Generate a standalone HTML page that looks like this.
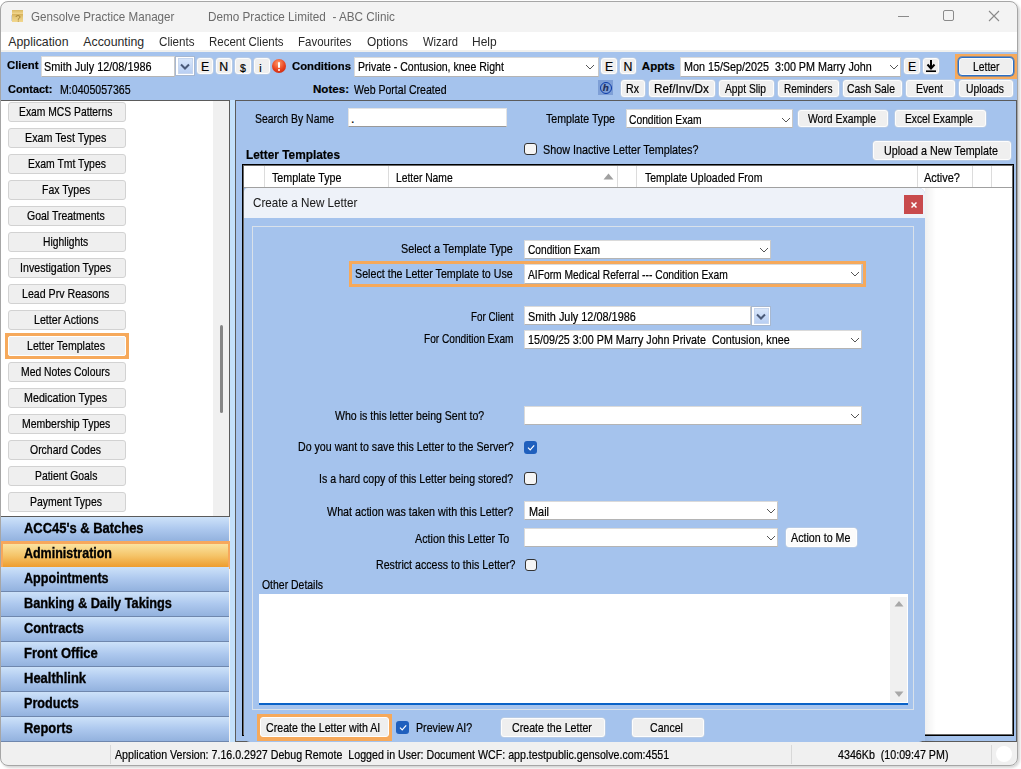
<!DOCTYPE html>
<html><head><meta charset="utf-8"><style>
*{box-sizing:border-box;margin:0;padding:0}
html,body{width:1021px;height:769px;overflow:hidden;background:#fff}
body{font-family:"Liberation Sans",sans-serif;position:relative}
.a{position:absolute}
.t{position:absolute;white-space:pre;line-height:1;-webkit-text-stroke:0.2px currentColor}

</style></head><body>
<div class="a" style="left:0px;top:0px;width:1021px;height:769px;background:#fff"></div>
<div class="a" style="left:1px;top:2px;width:1019px;height:766px;background:#d6d6d6;border-radius:9px;filter:blur(1px)"></div>
<div class="a" style="left:0px;top:1px;width:1018px;height:765px;background:#f3f3f3;border-radius:8px"></div>
<div class="a" style="left:10.5px;top:15px;width:1.5px;height:6px;background:#cfd3da;border-radius:1px"></div>
<div class="a" style="left:12px;top:10px;width:11px;height:12px;background:linear-gradient(#d9b863,#f0d48a 30%,#d8b25c 36%,#e5c777 60%,#f2d78f)"></div>
<svg class="a" style="left:14.5px;top:14.5px" width="6" height="7"><path d="M1 2Q1 0.5 3 0.5Q5 0.5 5 2Q5 3.2 3.3 3.8V4.8M3.3 5.6V6.6" fill="none" stroke="#a7873c" stroke-width="1"/></svg>
<div class="a" style="left:898px;top:16px;width:11px;height:1px;background:#8a8a8a"></div>
<div class="a" style="left:943px;top:10px;width:11px;height:11px;border:1px solid #8a8a8a;border-radius:2px"></div>
<svg class="a" style="left:988px;top:10px" width="12" height="12"><path d="M1 1L11 11M11 1L1 11" stroke="#8a8a8a" stroke-width="1.1"/></svg>
<div class="a" style="left:1px;top:32px;width:1016px;height:18px;background:#fff"></div>
<div class="a" style="left:1px;top:50px;width:1016px;height:2px;background:#f0f0ee"></div>
<div class="a" style="left:1px;top:52px;width:1016px;height:48px;background:#a5c3ed"></div>
<div class="a" style="left:1px;top:100px;width:1016px;height:1px;background:#5b5b5b"></div>
<div class="a" style="left:41px;top:56px;width:134px;height:21px;background:#fff;border:1px solid #dadada;border-bottom-color:#b4b4b4;border-right-color:#c8c8c8"></div>
<div class="a" style="left:175px;top:56px;width:19.599999999999994px;height:20px;background:#fff;border:1px solid #a8b8d0"></div>
<div class="a" style="left:178px;top:58px;width:14.599999999999994px;height:16px;background:linear-gradient(#d8e6fa,#b9cff3);border:1px solid #c6d6ef"></div>
<svg class="a" style="left:179.8px;top:63.0px" width="10" height="7"><path d="M1 1.5L5 5.5L9 1.5" fill="none" stroke="#4a5a78" stroke-width="2"/></svg>
<div class="a" style="left:197px;top:57.5px;width:16px;height:16.5px;background:#efefef;border:1px solid #fdfdfd;border-radius:3px;box-shadow:0 0 0 0.5px #c9d3df;"></div>
<div class="a" style="left:215.5px;top:57.5px;width:16.5px;height:16.5px;background:#efefef;border:1px solid #fdfdfd;border-radius:3px;box-shadow:0 0 0 0.5px #c9d3df;"></div>
<div class="a" style="left:234.7px;top:57.5px;width:16.30000000000001px;height:16.5px;background:#efefef;border:1px solid #fdfdfd;border-radius:3px;box-shadow:0 0 0 0.5px #c9d3df;"></div>
<div class="a" style="left:254px;top:57.5px;width:16px;height:16.5px;background:#efefef;border:1px solid #fdfdfd;border-radius:3px;box-shadow:0 0 0 0.5px #c9d3df;"></div>
<div class="a" style="left:272px;top:59px;width:14px;height:14px;border-radius:50%;background:radial-gradient(circle at 45% 30%,#ff9a6a,#e8401c 55%,#b82010)"></div>
<div class="a" style="left:277.8px;top:61.5px;width:2.599999999999966px;height:6.0px;background:#fff;border-radius:1.2px"></div>
<div class="a" style="left:277.8px;top:68.6px;width:2.599999999999966px;height:2.4000000000000057px;background:#fff;border-radius:1.2px"></div>
<div class="a" style="left:354px;top:56.5px;width:244.5px;height:20.5px;background:#fff;border:1px solid #dadada;border-bottom-color:#b4b4b4;border-right-color:#c8c8c8"></div>
<svg class="a" style="left:585px;top:63.7px" width="10" height="6"><path d="M1 1L5 5L9 1" fill="none" stroke="#555" stroke-width="1"/></svg>
<div class="a" style="left:601px;top:57.5px;width:16px;height:16.5px;background:#efefef;border:1px solid #fdfdfd;border-radius:3px;box-shadow:0 0 0 0.5px #c9d3df;"></div>
<div class="a" style="left:619.6px;top:57.5px;width:16.600000000000023px;height:16.5px;background:#efefef;border:1px solid #fdfdfd;border-radius:3px;box-shadow:0 0 0 0.5px #c9d3df;"></div>
<div class="a" style="left:679.6px;top:56.5px;width:221.69999999999993px;height:20.5px;background:#fff;border:1px solid #dadada;border-bottom-color:#b4b4b4;border-right-color:#c8c8c8"></div>
<svg class="a" style="left:889px;top:63.7px" width="10" height="6"><path d="M1 1L5 5L9 1" fill="none" stroke="#555" stroke-width="1"/></svg>
<div class="a" style="left:904px;top:57.7px;width:15.799999999999955px;height:16.39999999999999px;background:#efefef;border:1px solid #fdfdfd;border-radius:3px;box-shadow:0 0 0 0.5px #c9d3df;"></div>
<div class="a" style="left:922.7px;top:57.7px;width:16.399999999999977px;height:16.39999999999999px;background:#efefef;border:1px solid #fdfdfd;border-radius:3px;box-shadow:0 0 0 0.5px #c9d3df;"></div>
<svg class="a" style="left:925px;top:59px" width="12" height="14"><path d="M6 1V9M2.5 5.5L6 9.5L9.5 5.5" fill="none" stroke="#000" stroke-width="2"/><path d="M1 12.2H11" stroke="#000" stroke-width="1.6"/></svg>
<div class="a" style="left:955.2px;top:54px;width:61.799999999999955px;height:24.5px;background:#f6a95b"></div>
<div class="a" style="left:958px;top:57px;width:55.799999999999955px;height:18.700000000000003px;background:#efefef;border:1px solid #2a6fc6;border-radius:4px;box-shadow:0 0 0 0.7px rgba(42,111,198,.7),inset 0 0 0 1px #fafafa"></div>
<div class="a" style="left:598px;top:80px;width:15px;height:15px;background:#7e9fd6"></div>
<div class="a" style="left:599.6px;top:81.6px;width:12px;height:12px;border-radius:50%;border:1.5px solid #0b3aa8"></div>
<div class="a" style="left:621px;top:80.2px;width:23.700000000000045px;height:16.599999999999994px;background:#efefef;border:1px solid #fdfdfd;border-radius:3px;box-shadow:0 0 0 0.5px #c9d3df;"></div>
<div class="a" style="left:648.6px;top:80.2px;width:66.19999999999993px;height:16.599999999999994px;background:#efefef;border:1px solid #fdfdfd;border-radius:3px;box-shadow:0 0 0 0.5px #c9d3df;"></div>
<div class="a" style="left:718.9px;top:80.2px;width:54.700000000000045px;height:16.599999999999994px;background:#efefef;border:1px solid #fdfdfd;border-radius:3px;box-shadow:0 0 0 0.5px #c9d3df;"></div>
<div class="a" style="left:777.7px;top:80.2px;width:61.09999999999991px;height:16.599999999999994px;background:#efefef;border:1px solid #fdfdfd;border-radius:3px;box-shadow:0 0 0 0.5px #c9d3df;"></div>
<div class="a" style="left:843px;top:80.2px;width:58.60000000000002px;height:16.599999999999994px;background:#efefef;border:1px solid #fdfdfd;border-radius:3px;box-shadow:0 0 0 0.5px #c9d3df;"></div>
<div class="a" style="left:905.7px;top:80.2px;width:49.09999999999991px;height:16.599999999999994px;background:#efefef;border:1px solid #fdfdfd;border-radius:3px;box-shadow:0 0 0 0.5px #c9d3df;"></div>
<div class="a" style="left:958.6px;top:80.2px;width:54.60000000000002px;height:16.599999999999994px;background:#efefef;border:1px solid #fdfdfd;border-radius:3px;box-shadow:0 0 0 0.5px #c9d3df;"></div>
<div class="a" style="left:1px;top:101px;width:228px;height:415px;background:#fff"></div>
<div class="a" style="left:229px;top:100px;width:1px;height:417px;background:#5b5b5b"></div>
<div class="a" style="left:213px;top:101px;width:16px;height:415px;background:#f0f0f0"></div>
<div class="a" style="left:220px;top:325px;width:3px;height:88px;background:#858585;border-radius:1.5px"></div>
<div class="a" style="left:230px;top:100px;width:5px;height:642px;background:#c4e1fb"></div>
<div class="a" style="left:235px;top:100px;width:1px;height:642px;background:#5b5b5b"></div>
<div class="a" style="left:8px;top:102px;width:118px;height:20px;background:#efefef;border:1px solid #d2d2d2;border-radius:3px"></div>
<div class="a" style="left:8px;top:128px;width:118px;height:20px;background:#efefef;border:1px solid #d2d2d2;border-radius:3px"></div>
<div class="a" style="left:8px;top:154px;width:118px;height:20px;background:#efefef;border:1px solid #d2d2d2;border-radius:3px"></div>
<div class="a" style="left:8px;top:180px;width:118px;height:20px;background:#efefef;border:1px solid #d2d2d2;border-radius:3px"></div>
<div class="a" style="left:8px;top:206px;width:118px;height:20px;background:#efefef;border:1px solid #d2d2d2;border-radius:3px"></div>
<div class="a" style="left:8px;top:232px;width:118px;height:20px;background:#efefef;border:1px solid #d2d2d2;border-radius:3px"></div>
<div class="a" style="left:8px;top:258px;width:118px;height:20px;background:#efefef;border:1px solid #d2d2d2;border-radius:3px"></div>
<div class="a" style="left:8px;top:284px;width:118px;height:20px;background:#efefef;border:1px solid #d2d2d2;border-radius:3px"></div>
<div class="a" style="left:8px;top:310px;width:118px;height:20px;background:#efefef;border:1px solid #d2d2d2;border-radius:3px"></div>
<div class="a" style="left:5px;top:333px;width:124px;height:26px;background:#f6a95b"></div>
<div class="a" style="left:8px;top:336px;width:118px;height:20px;background:#efefef;border:1px solid #fff;border-radius:2px"></div>
<div class="a" style="left:8px;top:362px;width:118px;height:20px;background:#efefef;border:1px solid #d2d2d2;border-radius:3px"></div>
<div class="a" style="left:8px;top:388px;width:118px;height:20px;background:#efefef;border:1px solid #d2d2d2;border-radius:3px"></div>
<div class="a" style="left:8px;top:414px;width:118px;height:20px;background:#efefef;border:1px solid #d2d2d2;border-radius:3px"></div>
<div class="a" style="left:8px;top:440px;width:118px;height:20px;background:#efefef;border:1px solid #d2d2d2;border-radius:3px"></div>
<div class="a" style="left:8px;top:466px;width:118px;height:20px;background:#efefef;border:1px solid #d2d2d2;border-radius:3px"></div>
<div class="a" style="left:8px;top:492px;width:118px;height:20px;background:#efefef;border:1px solid #d2d2d2;border-radius:3px"></div>
<div class="a" style="left:1px;top:516px;width:228px;height:1px;background:#5b5b5b"></div>
<div class="a" style="left:1px;top:517px;width:228px;height:24px;background:linear-gradient(#cde2f9,#adc8ee 50%,#93b2de)"></div>
<div class="a" style="left:1px;top:541px;width:228px;height:1px;background:#6f87ad"></div>
<div class="a" style="left:0px;top:541px;width:230px;height:28px;background:#f7a85c"></div>
<div class="a" style="left:3px;top:544px;width:225px;height:23px;background:linear-gradient(#fbe3a0,#f5c56a 50%,#ee9d2e)"></div>
<div class="a" style="left:1px;top:567px;width:228px;height:24px;background:linear-gradient(#cde2f9,#adc8ee 50%,#93b2de)"></div>
<div class="a" style="left:1px;top:591px;width:228px;height:1px;background:#6f87ad"></div>
<div class="a" style="left:1px;top:592px;width:228px;height:24px;background:linear-gradient(#cde2f9,#adc8ee 50%,#93b2de)"></div>
<div class="a" style="left:1px;top:616px;width:228px;height:1px;background:#6f87ad"></div>
<div class="a" style="left:1px;top:617px;width:228px;height:24px;background:linear-gradient(#cde2f9,#adc8ee 50%,#93b2de)"></div>
<div class="a" style="left:1px;top:641px;width:228px;height:1px;background:#6f87ad"></div>
<div class="a" style="left:1px;top:642px;width:228px;height:24px;background:linear-gradient(#cde2f9,#adc8ee 50%,#93b2de)"></div>
<div class="a" style="left:1px;top:666px;width:228px;height:1px;background:#6f87ad"></div>
<div class="a" style="left:1px;top:667px;width:228px;height:24px;background:linear-gradient(#cde2f9,#adc8ee 50%,#93b2de)"></div>
<div class="a" style="left:1px;top:691px;width:228px;height:1px;background:#6f87ad"></div>
<div class="a" style="left:1px;top:692px;width:228px;height:24px;background:linear-gradient(#cde2f9,#adc8ee 50%,#93b2de)"></div>
<div class="a" style="left:1px;top:716px;width:228px;height:1px;background:#6f87ad"></div>
<div class="a" style="left:1px;top:717px;width:228px;height:24px;background:linear-gradient(#cde2f9,#adc8ee 50%,#93b2de)"></div>
<div class="a" style="left:1px;top:741px;width:228px;height:1px;background:#6f87ad"></div>
<div class="a" style="left:236px;top:101px;width:780px;height:641px;background:#a5c3ed"></div>
<div class="a" style="left:1016px;top:100px;width:1px;height:642px;background:#5b5b5b"></div>
<div class="a" style="left:236px;top:741px;width:781px;height:1px;background:#5b5b5b"></div>
<div class="a" style="left:348.3px;top:108.2px;width:159.09999999999997px;height:19.200000000000003px;background:#fff;border:1px solid #dadada;border-bottom-color:#b4b4b4;border-right-color:#c8c8c8"></div>
<div class="a" style="left:348.3px;top:108.2px;width:159.09999999999997px;height:19.200000000000003px;border:1px solid #e4e4e4;border-bottom:1px solid #999"></div>
<div class="a" style="left:625.6px;top:108.8px;width:167.60000000000002px;height:19.200000000000003px;background:#fff;border:1px solid #dadada;border-bottom-color:#b4b4b4;border-right-color:#c8c8c8"></div>
<svg class="a" style="left:781px;top:116.7px" width="10" height="6"><path d="M1 1L5 5L9 1" fill="none" stroke="#555" stroke-width="1"/></svg>
<div class="a" style="left:798.3px;top:109.7px;width:89.5px;height:17.099999999999994px;background:#efefef;border:1px solid #fdfdfd;border-radius:3px;box-shadow:0 0 0 0.5px #c9d3df;"></div>
<div class="a" style="left:894.7px;top:109.7px;width:91.5px;height:17.099999999999994px;background:#efefef;border:1px solid #fdfdfd;border-radius:3px;box-shadow:0 0 0 0.5px #c9d3df;"></div>
<div class="a" style="left:524.1px;top:142.5px;width:12.600000000000023px;height:12.5px;background:#f5f5f5;border:1px solid #333;border-radius:3px"></div>
<div class="a" style="left:872.5px;top:140.9px;width:138.79999999999995px;height:19.099999999999994px;background:#efefef;border:1px solid #fdfdfd;border-radius:3px;box-shadow:0 0 0 0.5px #c9d3df;"></div>
<div class="a" style="left:242px;top:164px;width:772px;height:572px;background:#fff;border:1px solid #000;box-shadow:inset 1px 1px 0 #6a6a6a,inset -1px -1px 0 #6a6a6a"></div>
<div class="a" style="left:243.5px;top:187px;width:768.0px;height:1px;background:#a0a0a0"></div>
<div class="a" style="left:263.5px;top:166px;width:1.0px;height:21px;background:#dcdcdc"></div>
<div class="a" style="left:388px;top:166px;width:1px;height:21px;background:#dcdcdc"></div>
<div class="a" style="left:616.6px;top:166px;width:1.0px;height:21px;background:#dcdcdc"></div>
<div class="a" style="left:636.3px;top:166px;width:1.0px;height:21px;background:#dcdcdc"></div>
<div class="a" style="left:916.5px;top:166px;width:1.0px;height:21px;background:#dcdcdc"></div>
<div class="a" style="left:971.5px;top:166px;width:1.0px;height:21px;background:#dcdcdc"></div>
<div class="a" style="left:991.3px;top:166px;width:1.0px;height:21px;background:#dcdcdc"></div>
<svg class="a" style="left:603px;top:173px" width="11" height="7"><path d="M0.5 6.5L5.5 0.5L10.5 6.5Z" fill="#a0a0a0"/></svg>
<div class="a" style="left:925px;top:188px;width:11px;height:554px;background:linear-gradient(90deg,rgba(0,0,0,.06),rgba(0,0,0,0))"></div>
<div class="a" style="left:243.5px;top:188px;width:681.0px;height:554px;background:#a5c3ed;border-radius:0 6px 6px 6px;overflow:hidden"></div>
<div class="a" style="left:243.5px;top:188px;width:681.0px;height:30px;background:#eef2f9;border-radius:4px 6px 0 0"></div>
<div class="a" style="left:904.2px;top:195px;width:18.59999999999991px;height:19px;background:#c84a4c"></div>
<svg class="a" style="left:910.5px;top:201.5px" width="6" height="6"><path d="M0.5 0.5L5.5 5.5M5.5 0.5L0.5 5.5" stroke="#fff" stroke-width="1.5"/></svg>
<div class="a" style="left:252.2px;top:226.2px;width:661.5px;height:484.3px;border:1px solid #d9e1ea"></div>
<div class="a" style="left:524.2px;top:240px;width:247.19999999999993px;height:19px;background:#fff;border:1px solid #dadada;border-bottom-color:#b4b4b4;border-right-color:#c8c8c8"></div>
<svg class="a" style="left:759px;top:246.7px" width="10" height="6"><path d="M1 1L5 5L9 1" fill="none" stroke="#555" stroke-width="1"/></svg>
<div class="a" style="left:349px;top:260.8px;width:516.7px;height:26.19999999999999px;background:#f6a95b"></div>
<div class="a" style="left:352px;top:264px;width:510.6px;height:20px;background:#a5c3ed"></div>
<div class="a" style="left:524.2px;top:264px;width:338.29999999999995px;height:19.5px;background:#fff;border:1px solid #dadada;border-bottom-color:#b4b4b4;border-right-color:#c8c8c8"></div>
<svg class="a" style="left:850px;top:271.2px" width="10" height="6"><path d="M1 1L5 5L9 1" fill="none" stroke="#555" stroke-width="1"/></svg>
<div class="a" style="left:524.2px;top:306.3px;width:226.79999999999995px;height:19.19999999999999px;background:#fff;border:1px solid #dadada;border-bottom-color:#b4b4b4;border-right-color:#c8c8c8"></div>
<div class="a" style="left:751px;top:306.2px;width:19.5px;height:19.400000000000034px;background:#fff;border:1px solid #a8b8d0"></div>
<div class="a" style="left:754px;top:308.2px;width:14.5px;height:15.400000000000034px;background:linear-gradient(#d8e6fa,#b9cff3);border:1px solid #c6d6ef"></div>
<svg class="a" style="left:755.75px;top:312.9px" width="10" height="7"><path d="M1 1.5L5 5.5L9 1.5" fill="none" stroke="#4a5a78" stroke-width="2"/></svg>
<div class="a" style="left:524.2px;top:329.6px;width:338.0px;height:19.799999999999955px;background:#fff;border:1px solid #dadada;border-bottom-color:#b4b4b4;border-right-color:#c8c8c8"></div>
<svg class="a" style="left:850px;top:337.2px" width="10" height="6"><path d="M1 1L5 5L9 1" fill="none" stroke="#555" stroke-width="1"/></svg>
<div class="a" style="left:524px;top:405.6px;width:338.20000000000005px;height:19.799999999999955px;background:#fff;border:1px solid #dadada;border-bottom-color:#b4b4b4;border-right-color:#c8c8c8"></div>
<svg class="a" style="left:850px;top:413.2px" width="10" height="6"><path d="M1 1L5 5L9 1" fill="none" stroke="#555" stroke-width="1"/></svg>
<div class="a" style="left:524px;top:441.3px;width:12.799999999999955px;height:12.5px;background:#1f5fbd;border-radius:3px"></div>
<svg class="a" style="left:525.5px;top:443px" width="10" height="9"><path d="M2 4.6L4.2 6.8L8.2 2.3" fill="none" stroke="#fff" stroke-width="1.2"/></svg>
<div class="a" style="left:524px;top:472.2px;width:12.799999999999955px;height:12.800000000000011px;background:#f5f5f5;border:1px solid #333;border-radius:3px"></div>
<div class="a" style="left:524.3px;top:500.8px;width:254.10000000000002px;height:19.19999999999999px;background:#fff;border:1px solid #dadada;border-bottom-color:#b4b4b4;border-right-color:#c8c8c8"></div>
<svg class="a" style="left:766px;top:508.2px" width="10" height="6"><path d="M1 1L5 5L9 1" fill="none" stroke="#555" stroke-width="1"/></svg>
<div class="a" style="left:524.3px;top:527.8px;width:254.10000000000002px;height:19.600000000000023px;background:#fff;border:1px solid #dadada;border-bottom-color:#b4b4b4;border-right-color:#c8c8c8"></div>
<svg class="a" style="left:766px;top:535.2px" width="10" height="6"><path d="M1 1L5 5L9 1" fill="none" stroke="#555" stroke-width="1"/></svg>
<div class="a" style="left:785.5px;top:527.8px;width:71.70000000000005px;height:19.600000000000023px;background:#fbfbfb;border:1px solid #fff;border-radius:3px;box-shadow:0 0 0 0.5px #c9d3df"></div>
<div class="a" style="left:524.5px;top:558.7px;width:12.200000000000045px;height:12.299999999999955px;background:#f5f5f5;border:1px solid #333;border-radius:3px"></div>
<div class="a" style="left:259px;top:594px;width:648.5px;height:111px;background:#fff"></div>
<div class="a" style="left:259px;top:703px;width:648.5px;height:2px;background:#0a62c7"></div>
<div class="a" style="left:890px;top:597px;width:17px;height:105px;background:#f0f0f0"></div>
<svg class="a" style="left:893.5px;top:600px" width="10" height="7"><path d="M0.5 6.5L5 1L9.5 6.5Z" fill="#a8a8a8"/></svg>
<svg class="a" style="left:893.5px;top:691px" width="10" height="7"><path d="M0.5 0.5L5 6L9.5 0.5Z" fill="#a8a8a8"/></svg>
<div class="a" style="left:256.8px;top:714px;width:135.09999999999997px;height:27px;background:#f6a95b"></div>
<div class="a" style="left:260px;top:717.4px;width:128.5px;height:19.800000000000068px;background:#efefef;border:1px solid #fff;border-radius:3px"></div>
<div class="a" style="left:396px;top:721.2px;width:12.800000000000011px;height:12.599999999999909px;background:#1f5fbd;border-radius:3px"></div>
<svg class="a" style="left:397.5px;top:723px" width="10" height="9"><path d="M2 4.6L4.2 6.8L8.2 2.3" fill="none" stroke="#fff" stroke-width="1.2"/></svg>
<div class="a" style="left:500.5px;top:718.3px;width:104.29999999999995px;height:18.300000000000068px;background:#efefef;border:1px solid #fdfdfd;border-radius:3px;box-shadow:0 0 0 0.5px #c9d3df;"></div>
<div class="a" style="left:632.4px;top:718.3px;width:71.60000000000002px;height:18.300000000000068px;background:#efefef;border:1px solid #fdfdfd;border-radius:3px;box-shadow:0 0 0 0.5px #c9d3df;"></div>
<div class="a" style="left:1px;top:742px;width:1016px;height:23px;background:#f0f0f0;border-radius:0 0 7px 7px"></div>
<div class="a" style="left:110px;top:745px;width:1px;height:19px;background:#d8d8d8"></div>
<div class="a" style="left:791px;top:745px;width:1px;height:19px;background:#d8d8d8"></div>
<div class="a" style="left:991px;top:745px;width:1px;height:19px;background:#d8d8d8"></div>
<div class="a" style="left:996px;top:746px;width:16px;height:16px;border-radius:50%;background:#fff"></div>
<div class="a" style="left:0px;top:1px;width:1018px;height:765px;border:1px solid #a6a6a6;border-radius:8px"></div>
<div class="t" style="left:31.00px;top:10.73px;font-size:12.32px;font-weight:400;color:#6b6b6b;transform:scaleX(0.9440);transform-origin:0 0;-webkit-text-stroke:0;">Gensolve Practice Manager</div>
<div class="t" style="left:207.50px;top:10.73px;font-size:12.32px;font-weight:400;color:#6b6b6b;transform:scaleX(0.9518);transform-origin:0 0;-webkit-text-stroke:0;">Demo Practice Limited  - ABC Clinic</div>
<div class="t" style="left:8.30px;top:35.83px;font-size:12.32px;font-weight:400;color:#2a2a2a;-webkit-text-stroke:0;">Application</div>
<div class="t" style="left:83.30px;top:35.83px;font-size:12.32px;font-weight:400;color:#2a2a2a;-webkit-text-stroke:0;">Accounting</div>
<div class="t" style="left:159.20px;top:35.83px;font-size:12.32px;font-weight:400;color:#2a2a2a;transform:scaleX(0.9454);transform-origin:0 0;-webkit-text-stroke:0;">Clients</div>
<div class="t" style="left:209.10px;top:35.83px;font-size:12.32px;font-weight:400;color:#2a2a2a;transform:scaleX(0.9312);transform-origin:0 0;-webkit-text-stroke:0;">Recent Clients</div>
<div class="t" style="left:298.00px;top:35.83px;font-size:12.32px;font-weight:400;color:#2a2a2a;transform:scaleX(0.9320);transform-origin:0 0;-webkit-text-stroke:0;">Favourites</div>
<div class="t" style="left:366.70px;top:35.83px;font-size:12.32px;font-weight:400;color:#2a2a2a;transform:scaleX(0.9681);transform-origin:0 0;-webkit-text-stroke:0;">Options</div>
<div class="t" style="left:422.60px;top:35.83px;font-size:12.32px;font-weight:400;color:#2a2a2a;transform:scaleX(0.9105);transform-origin:0 0;-webkit-text-stroke:0;">Wizard</div>
<div class="t" style="left:472.30px;top:35.83px;font-size:12.32px;font-weight:400;color:#2a2a2a;transform:scaleX(0.9749);transform-origin:0 0;-webkit-text-stroke:0;">Help</div>
<div class="t" style="left:6.50px;top:59.84px;font-size:11.59px;font-weight:700;color:#000;transform:scaleX(0.9780);transform-origin:0 0;">Client</div>
<div class="t" style="left:44.30px;top:60.78px;font-size:12.03px;font-weight:400;color:#000;transform:scaleX(0.9048);transform-origin:0 0;">Smith July 12/08/1986</div>
<div class="t" style="left:200.89px;top:61.03px;font-size:12.32px;font-weight:400;color:#000;">E</div>
<div class="t" style="left:219.30px;top:61.03px;font-size:12.32px;font-weight:400;color:#000;">N</div>
<div class="t" style="left:239.91px;top:62.51px;font-size:10.58px;font-weight:400;color:#000;">$</div>
<div class="t" style="left:259.32px;top:62.51px;font-size:10.58px;font-weight:400;color:#000;">i</div>
<div class="t" style="left:292.00px;top:60.64px;font-size:11.59px;font-weight:700;color:#000;transform:scaleX(0.9746);transform-origin:0 0;">Conditions</div>
<div class="t" style="left:358.00px;top:60.78px;font-size:12.03px;font-weight:400;color:#000;transform:scaleX(0.8769);transform-origin:0 0;">Private - Contusion, knee Right</div>
<div class="t" style="left:604.89px;top:61.03px;font-size:12.32px;font-weight:400;color:#000;">E</div>
<div class="t" style="left:623.45px;top:61.03px;font-size:12.32px;font-weight:400;color:#000;">N</div>
<div class="t" style="left:641.80px;top:60.64px;font-size:11.59px;font-weight:700;color:#000;">Appts</div>
<div class="t" style="left:683.70px;top:60.78px;font-size:12.03px;font-weight:400;color:#000;transform:scaleX(0.8954);transform-origin:0 0;">Mon 15/Sep/2025  3:00 PM Marry John</div>
<div class="t" style="left:907.89px;top:61.03px;font-size:12.32px;font-weight:400;color:#000;">E</div>
<div class="t" style="left:972.50px;top:61.28px;font-size:12.03px;font-weight:400;color:#000;transform:scaleX(0.8615);transform-origin:0 0;">Letter</div>
<div class="t" style="left:8.30px;top:84.14px;font-size:11.59px;font-weight:700;color:#000;transform:scaleX(0.9443);transform-origin:0 0;">Contact:</div>
<div class="t" style="left:60.30px;top:83.78px;font-size:12.03px;font-weight:400;color:#000;transform:scaleX(0.8808);transform-origin:0 0;">M:0405057365</div>
<div class="t" style="left:313.00px;top:84.14px;font-size:11.59px;font-weight:700;color:#000;">Notes:</div>
<div class="t" style="left:354.00px;top:83.78px;font-size:12.03px;font-weight:400;color:#000;transform:scaleX(0.8784);transform-origin:0 0;">Web Portal Created</div>
<div class="t" style="left:602.80px;top:83.12px;font-size:9.86px;font-weight:400;color:#1c2c5c;font-style:italic;font-weight:700;">h</div>
<div class="t" style="left:626.00px;top:83.15px;font-size:12.17px;font-weight:400;color:#000;transform:scaleX(0.8737);transform-origin:0 0;">Rx</div>
<div class="t" style="left:654.00px;top:83.15px;font-size:12.17px;font-weight:400;color:#000;transform:scaleX(0.9678);transform-origin:0 0;">Ref/Inv/Dx</div>
<div class="t" style="left:725.00px;top:83.15px;font-size:12.17px;font-weight:400;color:#000;transform:scaleX(0.8414);transform-origin:0 0;">Appt Slip</div>
<div class="t" style="left:783.50px;top:83.15px;font-size:12.17px;font-weight:400;color:#000;transform:scaleX(0.8240);transform-origin:0 0;">Reminders</div>
<div class="t" style="left:847.00px;top:83.15px;font-size:12.17px;font-weight:400;color:#000;transform:scaleX(0.8546);transform-origin:0 0;">Cash Sale</div>
<div class="t" style="left:916.00px;top:83.15px;font-size:12.17px;font-weight:400;color:#000;transform:scaleX(0.8673);transform-origin:0 0;">Event</div>
<div class="t" style="left:966.00px;top:83.15px;font-size:12.17px;font-weight:400;color:#000;transform:scaleX(0.8507);transform-origin:0 0;">Uploads</div>
<div class="t" style="left:19.00px;top:106.70px;font-size:11.88px;font-weight:400;color:#000;transform:scaleX(0.8686);transform-origin:0 0;">Exam MCS Patterns</div>
<div class="t" style="left:25.00px;top:132.70px;font-size:11.88px;font-weight:400;color:#000;transform:scaleX(0.9039);transform-origin:0 0;">Exam Test Types</div>
<div class="t" style="left:27.50px;top:158.70px;font-size:11.88px;font-weight:400;color:#000;transform:scaleX(0.8792);transform-origin:0 0;">Exam Tmt Types</div>
<div class="t" style="left:42.20px;top:184.70px;font-size:11.88px;font-weight:400;color:#000;transform:scaleX(0.8845);transform-origin:0 0;">Fax Types</div>
<div class="t" style="left:26.60px;top:210.70px;font-size:11.88px;font-weight:400;color:#000;transform:scaleX(0.8845);transform-origin:0 0;">Goal Treatments</div>
<div class="t" style="left:43.10px;top:236.70px;font-size:11.88px;font-weight:400;color:#000;transform:scaleX(0.8681);transform-origin:0 0;">Highlights</div>
<div class="t" style="left:20.20px;top:262.70px;font-size:11.88px;font-weight:400;color:#000;transform:scaleX(0.8974);transform-origin:0 0;">Investigation Types</div>
<div class="t" style="left:22.00px;top:288.70px;font-size:11.88px;font-weight:400;color:#000;transform:scaleX(0.8949);transform-origin:0 0;">Lead Prv Reasons</div>
<div class="t" style="left:34.00px;top:314.70px;font-size:11.88px;font-weight:400;color:#000;transform:scaleX(0.8957);transform-origin:0 0;">Letter Actions</div>
<div class="t" style="left:27.30px;top:340.70px;font-size:11.88px;font-weight:400;color:#000;transform:scaleX(0.8900);transform-origin:0 0;">Letter Templates</div>
<div class="t" style="left:21.30px;top:366.70px;font-size:11.88px;font-weight:400;color:#000;transform:scaleX(0.8740);transform-origin:0 0;">Med Notes Colours</div>
<div class="t" style="left:24.20px;top:392.70px;font-size:11.88px;font-weight:400;color:#000;transform:scaleX(0.9018);transform-origin:0 0;">Medication Types</div>
<div class="t" style="left:22.10px;top:418.70px;font-size:11.88px;font-weight:400;color:#000;transform:scaleX(0.8824);transform-origin:0 0;">Membership Types</div>
<div class="t" style="left:30.40px;top:444.70px;font-size:11.88px;font-weight:400;color:#000;transform:scaleX(0.8811);transform-origin:0 0;">Orchard Codes</div>
<div class="t" style="left:35.10px;top:470.70px;font-size:11.88px;font-weight:400;color:#000;transform:scaleX(0.8746);transform-origin:0 0;">Patient Goals</div>
<div class="t" style="left:30.20px;top:496.70px;font-size:11.88px;font-weight:400;color:#000;transform:scaleX(0.8814);transform-origin:0 0;">Payment Types</div>
<div class="t" style="left:24.00px;top:521.30px;font-size:14.35px;font-weight:700;color:#000;transform:scaleX(0.9020);transform-origin:0 0;-webkit-text-stroke:0.35px #000;">ACC45&#x27;s &amp; Batches</div>
<div class="t" style="left:24.00px;top:546.30px;font-size:14.35px;font-weight:700;color:#000;transform:scaleX(0.8693);transform-origin:0 0;-webkit-text-stroke:0.35px #000;">Administration</div>
<div class="t" style="left:24.00px;top:571.30px;font-size:14.35px;font-weight:700;color:#000;transform:scaleX(0.8772);transform-origin:0 0;-webkit-text-stroke:0.35px #000;">Appointments</div>
<div class="t" style="left:24.00px;top:596.30px;font-size:14.35px;font-weight:700;color:#000;transform:scaleX(0.8896);transform-origin:0 0;-webkit-text-stroke:0.35px #000;">Banking &amp; Daily Takings</div>
<div class="t" style="left:24.00px;top:621.30px;font-size:14.35px;font-weight:700;color:#000;transform:scaleX(0.8930);transform-origin:0 0;-webkit-text-stroke:0.35px #000;">Contracts</div>
<div class="t" style="left:24.00px;top:646.30px;font-size:14.35px;font-weight:700;color:#000;transform:scaleX(0.9077);transform-origin:0 0;-webkit-text-stroke:0.35px #000;">Front Office</div>
<div class="t" style="left:24.00px;top:671.30px;font-size:14.35px;font-weight:700;color:#000;transform:scaleX(0.9057);transform-origin:0 0;-webkit-text-stroke:0.35px #000;">Healthlink</div>
<div class="t" style="left:24.00px;top:696.30px;font-size:14.35px;font-weight:700;color:#000;transform:scaleX(0.8796);transform-origin:0 0;-webkit-text-stroke:0.35px #000;">Products</div>
<div class="t" style="left:24.00px;top:721.30px;font-size:14.35px;font-weight:700;color:#000;transform:scaleX(0.8983);transform-origin:0 0;-webkit-text-stroke:0.35px #000;">Reports</div>
<div class="t" style="left:255.00px;top:113.33px;font-size:12.32px;font-weight:400;color:#000;transform:scaleX(0.8484);transform-origin:0 0;">Search By Name</div>
<div class="t" style="left:351.00px;top:113.33px;font-size:12.32px;font-weight:400;color:#000;">.</div>
<div class="t" style="left:546.00px;top:113.33px;font-size:12.32px;font-weight:400;color:#000;transform:scaleX(0.8637);transform-origin:0 0;">Template Type</div>
<div class="t" style="left:629.00px;top:113.53px;font-size:12.32px;font-weight:400;color:#000;transform:scaleX(0.8349);transform-origin:0 0;">Condition Exam</div>
<div class="t" style="left:808.00px;top:112.78px;font-size:12.03px;font-weight:400;color:#000;transform:scaleX(0.8644);transform-origin:0 0;">Word Example</div>
<div class="t" style="left:905.00px;top:112.78px;font-size:12.03px;font-weight:400;color:#000;transform:scaleX(0.8547);transform-origin:0 0;">Excel Example</div>
<div class="t" style="left:245.50px;top:148.86px;font-size:12.75px;font-weight:700;color:#000;transform:scaleX(0.9296);transform-origin:0 0;">Letter Templates</div>
<div class="t" style="left:543.30px;top:143.53px;font-size:12.32px;font-weight:400;color:#000;transform:scaleX(0.8745);transform-origin:0 0;">Show Inactive Letter Templates?</div>
<div class="t" style="left:884.00px;top:145.28px;font-size:12.03px;font-weight:400;color:#000;transform:scaleX(0.8942);transform-origin:0 0;">Upload a New Template</div>
<div class="t" style="left:271.50px;top:171.78px;font-size:12.03px;font-weight:400;color:#000;transform:scaleX(0.8909);transform-origin:0 0;">Template Type</div>
<div class="t" style="left:396.30px;top:171.78px;font-size:12.03px;font-weight:400;color:#000;transform:scaleX(0.8566);transform-origin:0 0;">Letter Name</div>
<div class="t" style="left:644.50px;top:171.78px;font-size:12.03px;font-weight:400;color:#000;transform:scaleX(0.8700);transform-origin:0 0;">Template Uploaded From</div>
<div class="t" style="left:924.00px;top:171.78px;font-size:12.03px;font-weight:400;color:#000;transform:scaleX(0.9126);transform-origin:0 0;">Active?</div>
<div class="t" style="left:253.00px;top:197.11px;font-size:12.46px;font-weight:400;color:#1a1a1a;transform:scaleX(0.9369);transform-origin:0 0;-webkit-text-stroke:0.05px #1a1a1a;">Create a New Letter</div>
<div class="t" style="left:401.30px;top:243.15px;font-size:12.17px;font-weight:400;color:#000;transform:scaleX(0.8882);transform-origin:0 0;">Select a Template Type</div>
<div class="t" style="left:528.00px;top:244.15px;font-size:12.17px;font-weight:400;color:#000;transform:scaleX(0.8378);transform-origin:0 0;">Condition Exam</div>
<div class="t" style="left:355.30px;top:268.15px;font-size:12.17px;font-weight:400;color:#000;transform:scaleX(0.8789);transform-origin:0 0;">Select the Letter Template to Use</div>
<div class="t" style="left:528.00px;top:268.65px;font-size:12.17px;font-weight:400;color:#000;transform:scaleX(0.8447);transform-origin:0 0;">AIForm Medical Referral --- Condition Exam</div>
<div class="t" style="left:470.70px;top:310.95px;font-size:12.17px;font-weight:400;color:#000;transform:scaleX(0.8073);transform-origin:0 0;">For Client</div>
<div class="t" style="left:528.00px;top:310.95px;font-size:12.17px;font-weight:400;color:#000;transform:scaleX(0.8965);transform-origin:0 0;">Smith July 12/08/1986</div>
<div class="t" style="left:423.70px;top:333.45px;font-size:12.17px;font-weight:400;color:#000;transform:scaleX(0.8329);transform-origin:0 0;">For Condition Exam</div>
<div class="t" style="left:527.50px;top:334.15px;font-size:12.17px;font-weight:400;color:#000;transform:scaleX(0.8840);transform-origin:0 0;">15/09/25 3:00 PM Marry John Private  Contusion, knee</div>
<div class="t" style="left:335.00px;top:410.45px;font-size:12.17px;font-weight:400;color:#000;transform:scaleX(0.8692);transform-origin:0 0;">Who is this letter being Sent to?</div>
<div class="t" style="left:297.50px;top:441.35px;font-size:12.17px;font-weight:400;color:#000;transform:scaleX(0.8745);transform-origin:0 0;">Do you want to save this Letter to the Server?</div>
<div class="t" style="left:319.00px;top:472.65px;font-size:12.17px;font-weight:400;color:#000;transform:scaleX(0.8683);transform-origin:0 0;">Is a hard copy of this Letter being stored?</div>
<div class="t" style="left:327.00px;top:505.65px;font-size:12.17px;font-weight:400;color:#000;transform:scaleX(0.8834);transform-origin:0 0;">What action was taken with this Letter?</div>
<div class="t" style="left:528.50px;top:505.65px;font-size:12.17px;font-weight:400;color:#000;transform:scaleX(0.8960);transform-origin:0 0;">Mail</div>
<div class="t" style="left:415.00px;top:533.15px;font-size:12.17px;font-weight:400;color:#000;transform:scaleX(0.8848);transform-origin:0 0;">Action this Letter To</div>
<div class="t" style="left:791.00px;top:532.15px;font-size:12.17px;font-weight:400;color:#000;transform:scaleX(0.8793);transform-origin:0 0;">Action to Me</div>
<div class="t" style="left:376.40px;top:559.15px;font-size:12.17px;font-weight:400;color:#000;transform:scaleX(0.8743);transform-origin:0 0;">Restrict access to this Letter?</div>
<div class="t" style="left:261.50px;top:579.90px;font-size:11.88px;font-weight:400;color:#000;transform:scaleX(0.8796);transform-origin:0 0;">Other Details</div>
<div class="t" style="left:266.20px;top:722.15px;font-size:12.17px;font-weight:400;color:#000;transform:scaleX(0.8767);transform-origin:0 0;">Create the Letter with AI</div>
<div class="t" style="left:415.60px;top:722.15px;font-size:12.17px;font-weight:400;color:#000;transform:scaleX(0.8758);transform-origin:0 0;">Preview AI?</div>
<div class="t" style="left:512.20px;top:722.15px;font-size:12.17px;font-weight:400;color:#000;transform:scaleX(0.8757);transform-origin:0 0;">Create the Letter</div>
<div class="t" style="left:650.00px;top:722.15px;font-size:12.17px;font-weight:400;color:#000;transform:scaleX(0.8708);transform-origin:0 0;">Cancel</div>
<div class="t" style="left:115.30px;top:749.15px;font-size:12.17px;font-weight:400;color:#000;transform:scaleX(0.8762);transform-origin:0 0;">Application Version: 7.16.0.2927 Debug Remote  Logged in User: Document WCF: app.testpublic.gensolve.com:4551</div>
<div class="t" style="left:837.60px;top:749.15px;font-size:12.17px;font-weight:400;color:#000;transform:scaleX(0.8786);transform-origin:0 0;">4346Kb  (10:09:47 PM)</div>
</body></html>
